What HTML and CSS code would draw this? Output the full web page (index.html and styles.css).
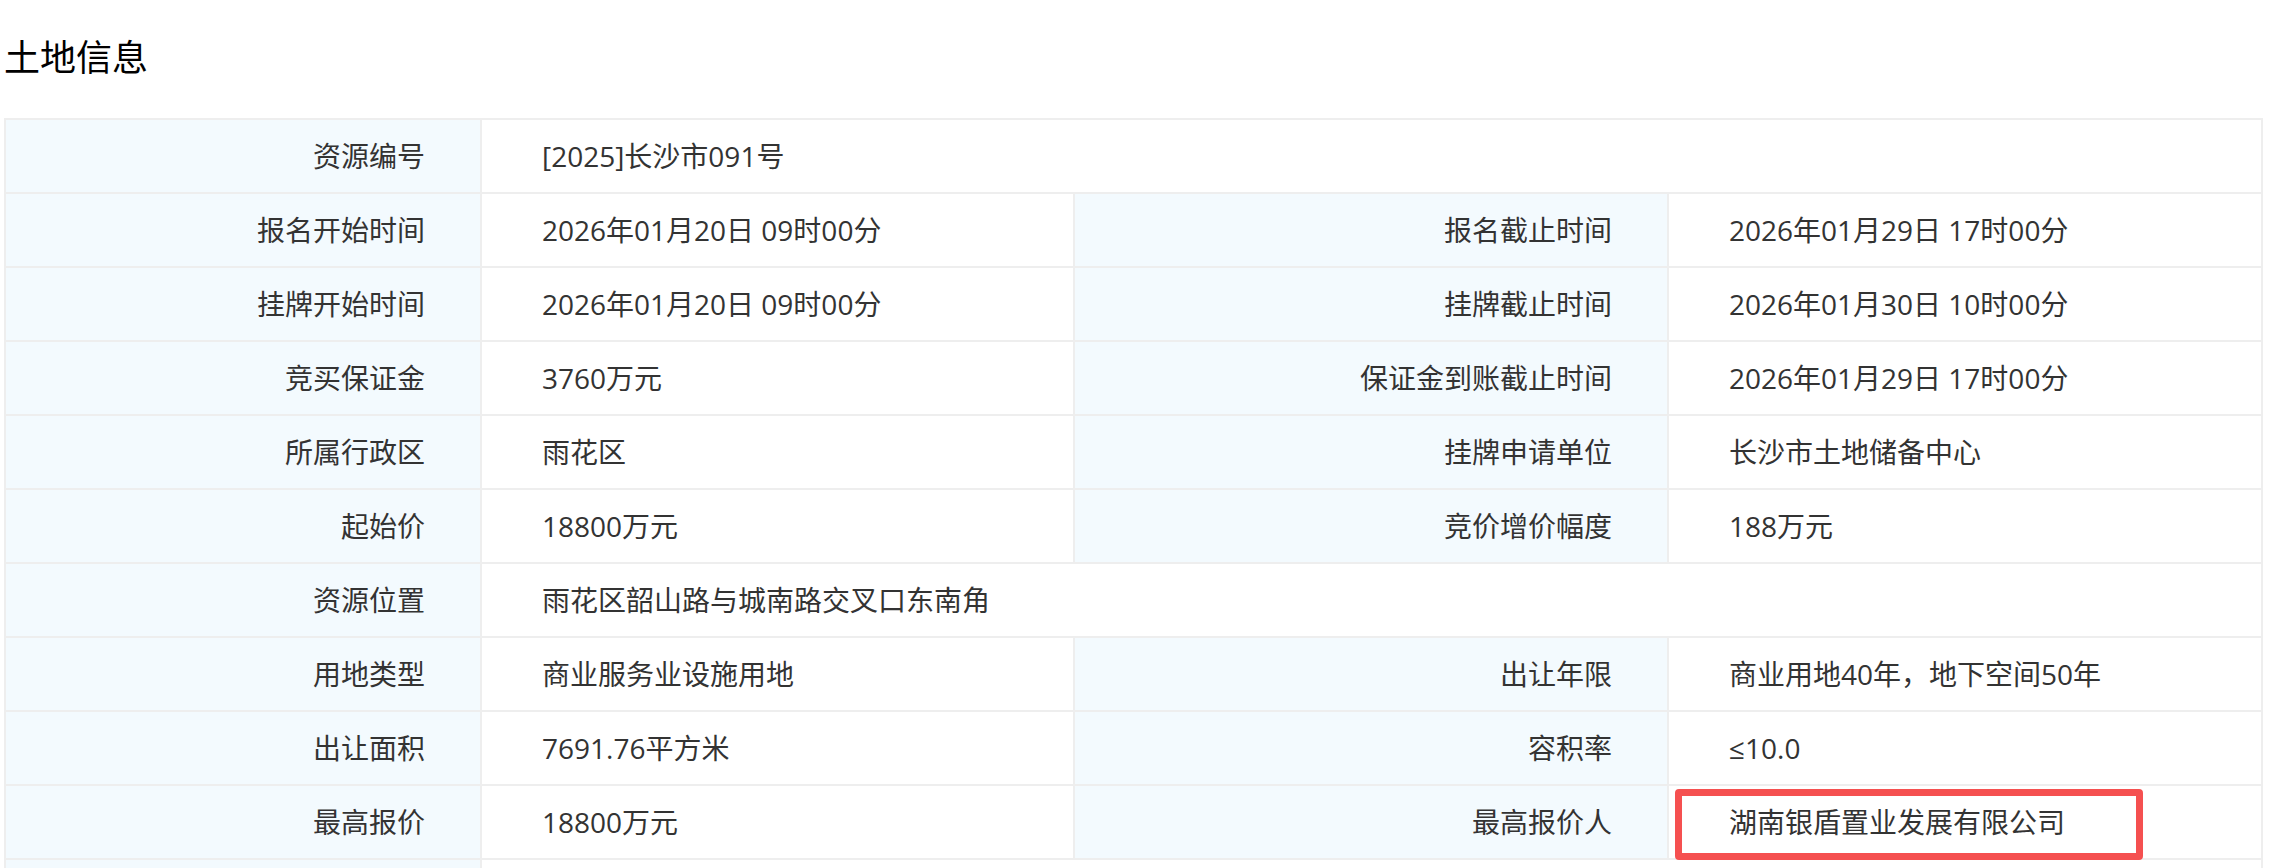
FILE: index.html
```html
<!DOCTYPE html>
<html lang="zh-CN">
<head>
<meta charset="utf-8">
<title>土地信息</title>
<link rel="stylesheet" href="styles.css">
</head>
<body>
<div class="page">
  <h2 class="title">土地信息</h2>
  <table class="info">
    <colgroup>
      <col class="c1"><col class="c2"><col class="c3"><col class="c4">
    </colgroup>
    <tbody>
      <tr><td class="lbl">资源编号</td><td class="val" colspan="3">[2025]长沙市091号</td></tr>
      <tr><td class="lbl">报名开始时间</td><td class="val">2026年01月20日 09时00分</td><td class="lbl">报名截止时间</td><td class="val">2026年01月29日 17时00分</td></tr>
      <tr><td class="lbl">挂牌开始时间</td><td class="val">2026年01月20日 09时00分</td><td class="lbl">挂牌截止时间</td><td class="val">2026年01月30日 10时00分</td></tr>
      <tr><td class="lbl">竞买保证金</td><td class="val">3760万元</td><td class="lbl">保证金到账截止时间</td><td class="val">2026年01月29日 17时00分</td></tr>
      <tr><td class="lbl">所属行政区</td><td class="val">雨花区</td><td class="lbl">挂牌申请单位</td><td class="val">长沙市土地储备中心</td></tr>
      <tr><td class="lbl">起始价</td><td class="val">18800万元</td><td class="lbl">竞价增价幅度</td><td class="val">188万元</td></tr>
      <tr><td class="lbl">资源位置</td><td class="val" colspan="3">雨花区韶山路与城南路交叉口东南角</td></tr>
      <tr><td class="lbl">用地类型</td><td class="val">商业服务业设施用地</td><td class="lbl">出让年限</td><td class="val">商业用地40年，地下空间50年</td></tr>
      <tr><td class="lbl">出让面积</td><td class="val">7691.76平方米</td><td class="lbl">容积率</td><td class="val">≤10.0</td></tr>
      <tr><td class="lbl">最高报价</td><td class="val">18800万元</td><td class="lbl">最高报价人</td><td class="val hl">湖南银盾置业发展有限公司<span class="mark"></span></td></tr>
      <tr><td class="lbl">&nbsp;</td><td class="val" colspan="3">&nbsp;</td></tr>
    </tbody>
  </table>
</div>
</body>
</html>
```

FILE: styles.css
```css
html, body {
  margin: 0;
  padding: 0;
  background: #ffffff;
}

body {
  font-family: "Open Sans", "Noto Sans CJK SC", "Microsoft YaHei", sans-serif;
  color: #333333;
}

.page {
  padding: 0 0 0 4px;
}

.title {
  margin: 37px 0 45px 0;
  font-size: 36px;
  line-height: 36px;
  font-weight: normal;
  color: #000000;
  font-family: "Noto Sans CJK SC", sans-serif;
}

.info {
  border-collapse: collapse;
  table-layout: fixed;
  width: 2257px;
  border: 2px solid #eeeeee;
}

.c1 { width: 476px; }
.c2 { width: 593px; }
.c3 { width: 594px; }
.c4 { width: 594px; }

.info td {
  border: 2px solid #eeeeee;
  height: 74px;
  padding: 0;
  font-size: 28px;
  line-height: 36px;
  vertical-align: middle;
  white-space: nowrap;
  box-sizing: border-box;
}

.info td.lbl {
  background: #f3fafe;
  text-align: right;
  padding-right: 55px;
}

.info td.val {
  background: #ffffff;
  text-align: left;
  padding-left: 60px;
}

.info td.hl {
  position: relative;
}

.mark {
  position: absolute;
  left: 6px;
  top: 3px;
  width: 468px;
  height: 71px;
  box-sizing: border-box;
  border: 7px solid #f55050;
  border-radius: 4px;
}
```
